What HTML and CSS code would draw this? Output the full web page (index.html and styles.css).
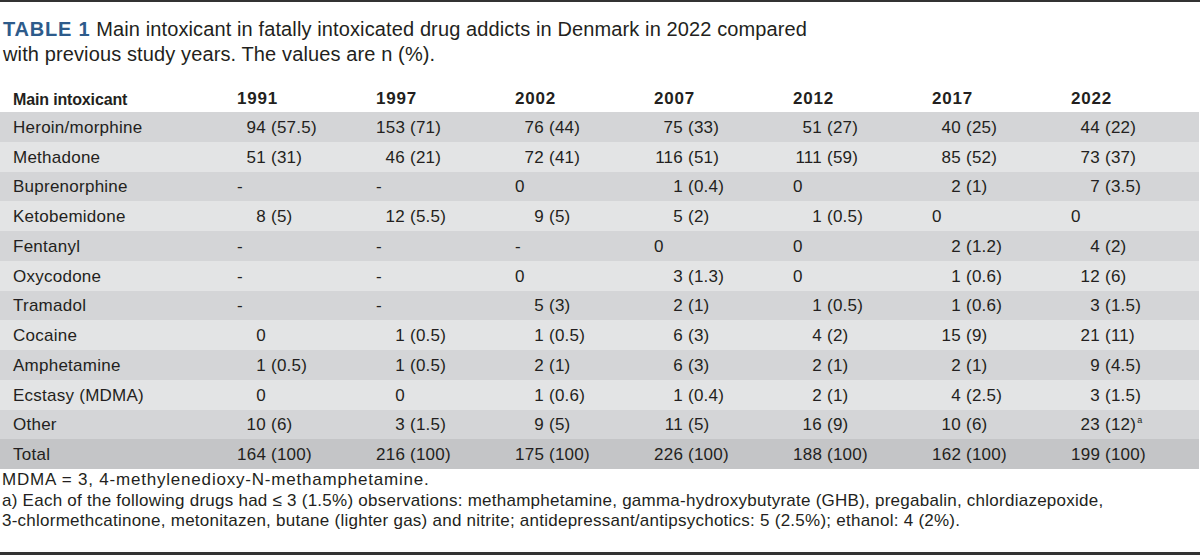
FILE: index.html
```html
<!DOCTYPE html>
<html lang="en">
<head>
<meta charset="utf-8">
<title>Table 1</title>
<link rel="stylesheet" href="styles.css">
</head>
<body>
<div class="page">
  <p class="caption"><span class="label">TABLE 1</span> Main intoxicant in fatally intoxicated drug addicts in Denmark in 2022 compared<br>with previous study years. The values are n (%).</p>
  <div class="table">
    <div class="row head">
      <div class="cell name">Main intoxicant</div>
      <div class="cell">1991</div><div class="cell">1997</div><div class="cell">2002</div><div class="cell">2007</div><div class="cell">2012</div><div class="cell">2017</div><div class="cell">2022</div>
    </div>
    <div class="row dark">
      <div class="cell name">Heroin/morphine</div>
      <div class="cell"><span class="n">94</span> (57.5)</div><div class="cell"><span class="n">153</span> (71)</div><div class="cell"><span class="n">76</span> (44)</div><div class="cell"><span class="n">75</span> (33)</div><div class="cell"><span class="n">51</span> (27)</div><div class="cell"><span class="n">40</span> (25)</div><div class="cell"><span class="n">44</span> (22)</div>
    </div>
    <div class="row light">
      <div class="cell name">Methadone</div>
      <div class="cell"><span class="n">51</span> (31)</div><div class="cell"><span class="n">46</span> (21)</div><div class="cell"><span class="n">72</span> (41)</div><div class="cell"><span class="n">116</span> (51)</div><div class="cell"><span class="n">111</span> (59)</div><div class="cell"><span class="n">85</span> (52)</div><div class="cell"><span class="n">73</span> (37)</div>
    </div>
    <div class="row dark">
      <div class="cell name">Buprenorphine</div>
      <div class="cell">-</div><div class="cell">-</div><div class="cell">0</div><div class="cell"><span class="n">1</span> (0.4)</div><div class="cell">0</div><div class="cell"><span class="n">2</span> (1)</div><div class="cell"><span class="n">7</span> (3.5)</div>
    </div>
    <div class="row light">
      <div class="cell name">Ketobemidone</div>
      <div class="cell"><span class="n">8</span> (5)</div><div class="cell"><span class="n">12</span> (5.5)</div><div class="cell"><span class="n">9</span> (5)</div><div class="cell"><span class="n">5</span> (2)</div><div class="cell"><span class="n">1</span> (0.5)</div><div class="cell">0</div><div class="cell">0</div>
    </div>
    <div class="row dark">
      <div class="cell name">Fentanyl</div>
      <div class="cell">-</div><div class="cell">-</div><div class="cell">-</div><div class="cell">0</div><div class="cell">0</div><div class="cell"><span class="n">2</span> (1.2)</div><div class="cell"><span class="n">4</span> (2)</div>
    </div>
    <div class="row light">
      <div class="cell name">Oxycodone</div>
      <div class="cell">-</div><div class="cell">-</div><div class="cell">0</div><div class="cell"><span class="n">3</span> (1.3)</div><div class="cell">0</div><div class="cell"><span class="n">1</span> (0.6)</div><div class="cell"><span class="n">12</span> (6)</div>
    </div>
    <div class="row dark">
      <div class="cell name">Tramadol</div>
      <div class="cell">-</div><div class="cell">-</div><div class="cell"><span class="n">5</span> (3)</div><div class="cell"><span class="n">2</span> (1)</div><div class="cell"><span class="n">1</span> (0.5)</div><div class="cell"><span class="n">1</span> (0.6)</div><div class="cell"><span class="n">3</span> (1.5)</div>
    </div>
    <div class="row light">
      <div class="cell name">Cocaine</div>
      <div class="cell"><span class="n">0</span></div><div class="cell"><span class="n">1</span> (0.5)</div><div class="cell"><span class="n">1</span> (0.5)</div><div class="cell"><span class="n">6</span> (3)</div><div class="cell"><span class="n">4</span> (2)</div><div class="cell"><span class="n">15</span> (9)</div><div class="cell"><span class="n">21</span> (11)</div>
    </div>
    <div class="row dark">
      <div class="cell name">Amphetamine</div>
      <div class="cell"><span class="n">1</span> (0.5)</div><div class="cell"><span class="n">1</span> (0.5)</div><div class="cell"><span class="n">2</span> (1)</div><div class="cell"><span class="n">6</span> (3)</div><div class="cell"><span class="n">2</span> (1)</div><div class="cell"><span class="n">2</span> (1)</div><div class="cell"><span class="n">9</span> (4.5)</div>
    </div>
    <div class="row light">
      <div class="cell name">Ecstasy (MDMA)</div>
      <div class="cell"><span class="n">0</span></div><div class="cell"><span class="n">0</span></div><div class="cell"><span class="n">1</span> (0.6)</div><div class="cell"><span class="n">1</span> (0.4)</div><div class="cell"><span class="n">2</span> (1)</div><div class="cell"><span class="n">4</span> (2.5)</div><div class="cell"><span class="n">3</span> (1.5)</div>
    </div>
    <div class="row dark">
      <div class="cell name">Other</div>
      <div class="cell"><span class="n">10</span> (6)</div><div class="cell"><span class="n">3</span> (1.5)</div><div class="cell"><span class="n">9</span> (5)</div><div class="cell"><span class="n">11</span> (5)</div><div class="cell"><span class="n">16</span> (9)</div><div class="cell"><span class="n">10</span> (6)</div><div class="cell"><span class="n">23</span> (12)<sup class="fn">a</sup></div>
    </div>
    <div class="row total">
      <div class="cell name">Total</div>
      <div class="cell"><span class="n">164</span> (100)</div><div class="cell"><span class="n">216</span> (100)</div><div class="cell"><span class="n">175</span> (100)</div><div class="cell"><span class="n">226</span> (100)</div><div class="cell"><span class="n">188</span> (100)</div><div class="cell"><span class="n">162</span> (100)</div><div class="cell"><span class="n">199</span> (100)</div>
    </div>
  </div>
  <div class="notes">
    <p class="abbr">MDMA = 3, 4-methylenedioxy-N-methamphetamine.</p>
    <p>a) Each of the following drugs had ≤ 3 (1.5%) observations: methamphetamine, gamma-hydroxybutyrate (GHB), pregabalin, chlordiazepoxide,<br>3-chlormethcatinone, metonitazen, butane (lighter gas) and nitrite; antidepressant/antipsychotics: 5 (2.5%); ethanol: 4 (2%).</p>
  </div>
</div>
</body>
</html>
```

FILE: styles.css
```css
html, body {
  margin: 0;
  padding: 0;
  background: #ffffff;
}

body {
  font-family: "Liberation Sans", Arial, sans-serif;
  color: #231f20;
}

.page {
  width: 1200px;
  height: 558px;
  box-sizing: border-box;
  border-top: 2px solid #333333;
  display: flex;
  flex-direction: column;
}

.caption {
  margin: 15px 0 0 3px;
  font-size: 20px;
  line-height: 25px;
  letter-spacing: 0.12px;
}

.label {
  color: #2d5b8b;
  font-weight: bold;
  letter-spacing: 0.8px;
}

.table {
  margin-top: 15px;
  width: 1199px;
  display: flex;
  flex-direction: column;
}

.row {
  display: grid;
  grid-template-columns: 237px repeat(6, 139px) 1fr;
  height: 29.75px;
  align-items: center;
  font-size: 17px;
  letter-spacing: 0.25px;
}

.row.head {
  height: 30px;
  font-weight: bold;
  align-items: end;
  padding-bottom: 3px;
  box-sizing: border-box;
  letter-spacing: 0.8px;
}

.row.head .name {
  font-size: 16px;
  letter-spacing: -0.15px;
}

.dark { background: #d4d5d7; }
.light { background: #e3e4e5; }
.total { background: #c4c5c7; }

.cell {
  white-space: nowrap;
  padding-top: 2px;
}

.cell.name {
  padding-left: 13px;
}

.n {
  display: inline-block;
  width: 29px;
  text-align: right;
}

.fn {
  font-size: 9px;
  vertical-align: 7px;
  line-height: 0;
  margin-left: 1px;
}

.notes {
  font-size: 17px;
  line-height: 20.5px;
  letter-spacing: 0.25px;
  padding: 1px 0 0 2px;
  flex: 1;
  border-bottom: 3px solid #333333;
  margin-bottom: 3px;
}

.notes p {
  margin: 0;
}

.notes .abbr {
  letter-spacing: 0.8px;
}
```
